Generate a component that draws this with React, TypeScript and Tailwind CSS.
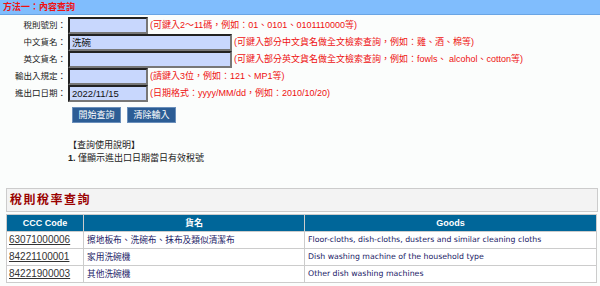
const rows = [
  { label: "稅則號別：", value: "", wide: false, hint: "(可鍵入2～11碼，例如：01、0101、0101110000等)" },
  { label: "中文貨名：", value: "洗碗", wide: true, hint: "(可鍵入部分中文貨名做全文檢索查詢，例如：雞、酒、棉等)" },
  { label: "英文貨名：", value: "", wide: true, hint: "(可鍵入部分英文貨名做全文檢索查詢，例如：fowls、 alcohol、cotton等)" },
  { label: "輸出入規定：", value: "", wide: false, hint: "(請鍵入3位，例如：121、MP1等)" },
  { label: "進出口日期：", value: "2022/11/15", wide: false, hint: "(日期格式：yyyy/MM/dd，例如：2010/10/20)" },
];

const results = [
  { code: "63071000006", name: "擦地板布、洗碗布、抹布及類似清潔布", goods: "Floor-cloths, dish-cloths, dusters and similar cleaning cloths" },
  { code: "84221100001", name: "家用洗碗機", goods: "Dish washing machine of the household type" },
  { code: "84221900003", name: "其他洗碗機", goods: "Other dish washing machines" },
];

const cjk = "font-['Liberation_Sans','Noto_Sans_CJK_TC',sans-serif]";

export default function App() {
  return (
    <div className={`w-[600px] h-[286px] overflow-hidden bg-[#fbfdfc] ${cjk}`}>
      {/* title bar */}
      <div className="h-[15px] bg-[#80bdfd] border-b border-[#6aa5e4] pl-[3px] flex items-center">
        <span className="text-[9px] font-bold text-[#f01010] leading-none">方法一：內容查詢</span>
      </div>

      {/* search form */}
      <div className="mt-[2px]">
        {rows.map((r) => (
          <div key={r.label} className="flex items-center h-[17px]">
            <div className="w-[66px] text-right text-[8.5px] text-[#222] leading-none">{r.label}</div>
            <div
              className={`ml-[2px] h-[17px] ${r.wide ? "w-[164px]" : "w-[80px]"} bg-[#c8d7fd] border-2 border-t-[#222] border-l-[#222] border-b-[#777] border-r-[#777] flex items-center px-[2px] text-[9.5px] text-[#111] leading-none`}
            >
              {r.value}
            </div>
            <div className="ml-[2px] text-[9px] text-[#ee1111] leading-none whitespace-nowrap">{r.hint}</div>
          </div>
        ))}
        <div className="flex gap-[6px] ml-[72px] mt-[5px]">
          <button className="w-[49px] h-[16px] bg-[#2c5d95] border border-[#6a8fbb] text-white text-[9px] leading-none">開始查詢</button>
          <button className="w-[49px] h-[16px] bg-[#2c5d95] border border-[#6a8fbb] text-white text-[9px] leading-none">清除輸入</button>
        </div>
        <div className="ml-[68px] mt-[16px] text-[9px] text-[#222] leading-[13px]">
          <div>【查詢使用說明】</div>
          <div>
            <span className="font-bold">1.</span> 僅顯示進出口日期當日有效稅號
          </div>
        </div>
      </div>

      {/* results */}
      <div className="mx-[6px] mt-[23px] w-[592px] h-[24px] bg-[#f3f3f3] border border-[#cccccc] flex items-center pl-[3px]">
        <span className="text-[12px] font-bold tracking-[1.5px] text-[#990000] leading-none">稅則稅率查詢</span>
      </div>
      <table className="ml-[6px] mt-[2px] w-[591px] border-collapse text-[9px] leading-none">
        <thead>
          <tr className="h-[17px] bg-[#006699] text-white font-bold">
            <th className="w-[77px] border border-[#cccccc] font-bold">CCC Code</th>
            <th className="w-[221px] border border-[#cccccc] font-bold">貨名</th>
            <th className="border border-[#cccccc] font-bold">Goods</th>
          </tr>
        </thead>
        <tbody>
          {results.map((r) => (
            <tr key={r.code} className="h-[17px] bg-white">
              <td className="border border-[#cccccc] pl-[2px] text-[10px] text-[#333] underline">{r.code}</td>
              <td className="border border-[#cccccc] pl-[3px] text-[8.7px] text-[#1a1a66]">{r.name}</td>
              <td className="border border-[#cccccc] pl-[3px] text-[#1a1a66] font-['DejaVu_Sans',sans-serif] text-[7.8px]">{r.goods}</td>
            </tr>
          ))}
        </tbody>
      </table>
    </div>
  );
}
